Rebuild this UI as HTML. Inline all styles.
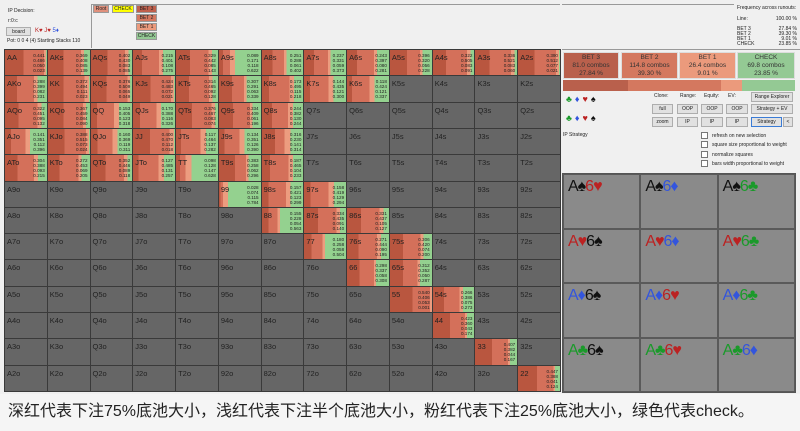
<!DOCTYPE html>
<html><head><meta charset="utf-8">
<style>
*{margin:0;padding:0;box-sizing:border-box}
body{width:800px;height:431px;background:#f0f0f0;font-family:"Liberation Sans",sans-serif;position:relative;overflow:hidden;color:#222}
.a{position:absolute;white-space:nowrap}
.t{font-size:5px}
.grid{position:absolute;left:4px;top:49px;width:557px;height:343px;padding:1px;background:#3a3a3a;display:grid;grid-template-columns:repeat(13,1fr);grid-template-rows:repeat(13,1fr);gap:1px}
.grid div{position:relative;overflow:hidden}
.g{background:#666}
.c{background:linear-gradient(to right,#b9563f 0 var(--a),#d4705a var(--a) var(--b),#ec9c7f var(--b) var(--c),#94d18f var(--c) 100%)}
.grid b{position:absolute;left:2px;top:3px;font-size:7.5px;font-weight:normal;color:#222}
.grid i{position:absolute;right:2px;top:3px;font-style:normal;font-size:4.6px;line-height:5px;text-align:right;color:#222}
.tb{position:absolute;font-size:5px;text-align:center;line-height:7px;height:8px;border:1px solid #999}
.bx{position:absolute;top:52px;height:27px;font-size:6.5px;line-height:8px;text-align:center;padding-top:1px;color:#333;border:1px solid #ddd}
.btn{position:absolute;height:10px;background:#e1e1e1;border:1px solid #adadad;font-size:5px;text-align:center;line-height:8px}
.cb{position:absolute;left:701px;font-size:5px;line-height:6px}
.cb:before{content:"";display:inline-block;width:5px;height:5px;border:1px solid #777;background:#fff;vertical-align:middle;margin-right:4px}
.cards{position:absolute;left:562px;top:173px;width:234px;height:220px;background:#8a8a8a;display:grid;grid-template-columns:repeat(3,1fr);grid-template-rows:repeat(4,1fr);border:1px solid #555}
.cards div{border:1px solid #5a5a5a;font-size:16px;padding:3px 0 0 4px;letter-spacing:-1px}
.s{color:#111}.h{color:#b22}.d{color:#3355dd}.k{color:#1a9a2a}
</style></head><body>
<div class="a t" style="left:8px;top:8px">IP Decision:</div>
<div class="a t" style="left:8px;top:18px">r:0:c</div>
<div class="btn" style="left:6px;top:27px;width:25px;height:9px">board</div>
<div class="a" style="left:35px;top:28px;font-size:6px"><span class="h">K♥</span> <span class="h">J♥</span> <span class="d">5♦</span></div>
<div class="a t" style="left:7px;top:38px">Pot: 0 0 4 (4) Starting Stacks 110</div>
<div class="a" style="left:91px;top:4px;width:1px;height:44px;background:#999"></div>
<div class="a" style="left:91px;top:4px;width:469px;height:1px;background:#999"></div>
<div class="tb" style="left:93px;top:5px;width:16px;background:#e0907c">Root</div>
<div class="tb" style="left:112px;top:5px;width:22px;background:#ffff00">CHECK</div>
<div class="tb" style="left:136px;top:5px;width:21px;background:#c0604c">BET 3</div>
<div class="tb" style="left:136px;top:14px;width:21px;background:#d4785f">BET 2</div>
<div class="tb" style="left:136px;top:23px;width:21px;background:#eb9a7c">BET 1</div>
<div class="tb" style="left:136px;top:32px;width:21px;background:#94c994">CHECK</div>
<div class="a" style="left:562px;top:4px;width:172px;height:1px;background:#999"></div>
<div class="a t" style="left:737px;top:5px">Frequency across runouts:</div>
<div class="a t" style="left:737px;top:16px;width:60px">Line:<span style="float:right">100.00 %</span></div>
<div class="a t" style="left:737px;top:27px;width:60px;line-height:5px">BET 3<span style="float:right">27.84 %</span><br>BET 2<span style="float:right">39.30 %</span><br>BET 1<span style="float:right">9.01 %</span><br>CHECK<span style="float:right">23.85 %</span></div>
<div class="a" style="left:562px;top:49px;width:238px;height:1px;background:#999"></div>
<div class="bx" style="left:563px;width:56px;background:#b9604c">BET 3<br>81.0 combos<br>27.84 %</div>
<div class="bx" style="left:621px;width:57px;background:#d4785f">BET 2<br>114.8 combos<br>39.30 %</div>
<div class="bx" style="left:679px;width:57px;background:#eb9a7c">BET 1<br>26.4 combos<br>9.01 %</div>
<div class="bx" style="left:737px;width:58px;background:#94c994">CHECK<br>69.8 combos<br>23.85 %</div>
<div class="a" style="left:563px;top:80px;width:232px;height:11px;background:linear-gradient(to right,#b9604c 0 65px,#d4785f 65px 158px,#eb9a7c 158px 179px,#94c994 179px)"></div>
<div class="a" style="left:566px;top:94px;font-size:9px;letter-spacing:3px"><span class="k">♣</span><span class="d">♦</span><span class="h">♥</span><span class="s">♠</span></div>
<div class="a" style="left:566px;top:113px;font-size:9px;letter-spacing:3px"><span class="k">♣</span><span class="d">♦</span><span class="h">♥</span><span class="s">♠</span></div>
<div class="a t" style="left:654px;top:93px">Clone:</div>
<div class="a t" style="left:680px;top:93px">Range:</div>
<div class="a t" style="left:704px;top:93px">Equity:</div>
<div class="a t" style="left:728px;top:93px">EV:</div>
<div class="btn" style="left:652px;top:104px;width:21px">full</div>
<div class="btn" style="left:677px;top:104px;width:21px">OOP</div>
<div class="btn" style="left:701px;top:104px;width:22px">OOP</div>
<div class="btn" style="left:726px;top:104px;width:22px">OOP</div>
<div class="btn" style="left:652px;top:117px;width:21px">zoom</div>
<div class="btn" style="left:677px;top:117px;width:21px">IP</div>
<div class="btn" style="left:701px;top:117px;width:22px">IP</div>
<div class="btn" style="left:726px;top:117px;width:22px">IP</div>
<div class="btn" style="left:751px;top:92px;width:42px">Range Explorer</div>
<div class="btn" style="left:751px;top:104px;width:42px">Strategy + EV</div>
<div class="btn" style="left:751px;top:117px;width:31px;border:1px solid #3a7bd5">Strategy</div>
<div class="btn" style="left:783px;top:117px;width:10px">&lt;</div>
<div class="a t" style="left:563px;top:132px">IP Strategy</div>
<div class="cb" style="top:132px">refresh on new selection</div>
<div class="cb" style="top:141px">square size proportional to weight</div>
<div class="cb" style="top:151px">normalize squares</div>
<div class="cb" style="top:160px">bars width proportional to weight</div>

<div class="grid">
<div class="c" style="--a:44%;--b:93%;--c:98%"><b>AA</b><i>0.441<br>0.486<br>0.050<br>0.023</i></div>
<div class="c" style="--a:37%;--b:78%;--c:86%"><b>AKs</b><i>0.369<br>0.408<br>0.085<br>0.139</i></div>
<div class="c" style="--a:40%;--b:83%;--c:92%"><b>AQs</b><i>0.402<br>0.430<br>0.083<br>0.085</i></div>
<div class="c" style="--a:22%;--b:62%;--c:72%"><b>AJs</b><i>0.215<br>0.401<br>0.108<br>0.275</i></div>
<div class="c" style="--a:33%;--b:77%;--c:86%"><b>ATs</b><i>0.329<br>0.442<br>0.085<br>0.143</i></div>
<div class="c" style="--a:9%;--b:26%;--c:38%"><b>A9s</b><i>0.089<br>0.171<br>0.118<br>0.622</i></div>
<div class="c" style="--a:25%;--b:54%;--c:60%"><b>A8s</b><i>0.251<br>0.288<br>0.061<br>0.402</i></div>
<div class="c" style="--a:24%;--b:57%;--c:63%"><b>A7s</b><i>0.237<br>0.331<br>0.059<br>0.373</i></div>
<div class="c" style="--a:24%;--b:64%;--c:72%"><b>A6s</b><i>0.243<br>0.397<br>0.080<br>0.281</i></div>
<div class="c" style="--a:40%;--b:72%;--c:77%"><b>A5s</b><i>0.396<br>0.320<br>0.056<br>0.228</i></div>
<div class="c" style="--a:32%;--b:83%;--c:91%"><b>A4s</b><i>0.322<br>0.505<br>0.083<br>0.091</i></div>
<div class="c" style="--a:34%;--b:86%;--c:94%"><b>A3s</b><i>0.336<br>0.521<br>0.083<br>0.060</i></div>
<div class="c" style="--a:39%;--b:90%;--c:98%"><b>A2s</b><i>0.390<br>0.512<br>0.077<br>0.021</i></div>

<div class="c" style="--a:29%;--b:69%;--c:77%"><b>AKo</b><i>0.288<br>0.399<br>0.082<br>0.231</i></div>
<div class="c" style="--a:37%;--b:87%;--c:98%"><b>KK</b><i>0.372<br>0.494<br>0.111<br>0.023</i></div>
<div class="c" style="--a:38%;--b:89%;--c:95%"><b>KQs</b><i>0.376<br>0.509<br>0.065<br>0.049</i></div>
<div class="c" style="--a:42%;--b:91%;--c:98%"><b>KJs</b><i>0.424<br>0.483<br>0.072<br>0.021</i></div>
<div class="c" style="--a:31%;--b:78%;--c:87%"><b>KTs</b><i>0.314<br>0.465<br>0.092<br>0.128</i></div>
<div class="c" style="--a:31%;--b:60%;--c:66%"><b>K9s</b><i>0.307<br>0.291<br>0.063<br>0.339</i></div>
<div class="c" style="--a:17%;--b:67%;--c:78%"><b>K8s</b><i>0.173<br>0.495<br>0.115<br>0.218</i></div>
<div class="c" style="--a:14%;--b:58%;--c:70%"><b>K7s</b><i>0.144<br>0.435<br>0.121<br>0.300</i></div>
<div class="c" style="--a:12%;--b:54%;--c:66%"><b>K6s</b><i>0.118<br>0.424<br>0.121<br>0.337</i></div>
<div class="g"><b>K5s</b></div><div class="g"><b>K4s</b></div><div class="g"><b>K3s</b></div><div class="g"><b>K2s</b></div>

<div class="c" style="--a:32%;--b:77%;--c:87%"><b>AQo</b><i>0.322<br>0.451<br>0.095<br>0.132</i></div>
<div class="c" style="--a:37%;--b:83%;--c:91%"><b>KQo</b><i>0.367<br>0.459<br>0.084<br>0.090</i></div>
<div class="c" style="--a:15%;--b:56%;--c:68%"><b>QQ</b><i>0.153<br>0.405<br>0.123<br>0.318</i></div>
<div class="c" style="--a:17%;--b:56%;--c:67%"><b>QJs</b><i>0.170<br>0.388<br>0.116<br>0.326</i></div>
<div class="c" style="--a:38%;--b:84%;--c:93%"><b>QTs</b><i>0.376<br>0.467<br>0.083<br>0.074</i></div>
<div class="c" style="--a:33%;--b:74%;--c:80%"><b>Q9s</b><i>0.334<br>0.409<br>0.061<br>0.196</i></div>
<div class="c" style="--a:24%;--b:63%;--c:76%"><b>Q8s</b><i>0.244<br>0.382<br>0.130<br>0.244</i></div>
<div class="g"><b>Q7s</b></div><div class="g"><b>Q6s</b></div><div class="g"><b>Q5s</b></div><div class="g"><b>Q4s</b></div><div class="g"><b>Q3s</b></div><div class="g"><b>Q2s</b></div>

<div class="c" style="--a:14%;--b:49%;--c:60%"><b>AJo</b><i>0.141<br>0.351<br>0.112<br>0.396</i></div>
<div class="c" style="--a:39%;--b:90%;--c:98%"><b>KJo</b><i>0.388<br>0.515<br>0.073<br>0.024</i></div>
<div class="c" style="--a:16%;--b:53%;--c:65%"><b>QJo</b><i>0.160<br>0.369<br>0.119<br>0.311</i></div>
<div class="c" style="--a:40%;--b:87%;--c:98%"><b>JJ</b><i>0.400<br>0.470<br>0.112<br>0.018</i></div>
<div class="c" style="--a:12%;--b:58%;--c:72%"><b>JTs</b><i>0.117<br>0.464<br>0.137<br>0.282</i></div>
<div class="c" style="--a:13%;--b:49%;--c:61%"><b>J9s</b><i>0.134<br>0.351<br>0.126<br>0.390</i></div>
<div class="c" style="--a:32%;--b:55%;--c:69%"><b>J8s</b><i>0.316<br>0.230<br>0.141<br>0.314</i></div>
<div class="g"><b>J7s</b></div><div class="g"><b>J6s</b></div><div class="g"><b>J5s</b></div><div class="g"><b>J4s</b></div><div class="g"><b>J3s</b></div><div class="g"><b>J2s</b></div>

<div class="c" style="--a:30%;--b:69%;--c:79%"><b>ATo</b><i>0.304<br>0.388<br>0.093<br>0.215</i></div>
<div class="c" style="--a:27%;--b:73%;--c:80%"><b>KTo</b><i>0.272<br>0.453<br>0.069<br>0.205</i></div>
<div class="c" style="--a:35%;--b:80%;--c:89%"><b>QTo</b><i>0.352<br>0.446<br>0.089<br>0.118</i></div>
<div class="c" style="--a:13%;--b:61%;--c:74%"><b>JTo</b><i>0.127<br>0.485<br>0.131<br>0.257</i></div>
<div class="c" style="--a:10%;--b:23%;--c:37%"><b>TT</b><i>0.098<br>0.128<br>0.147<br>0.628</i></div>
<div class="c" style="--a:38%;--b:64%;--c:70%"><b>T9s</b><i>0.383<br>0.258<br>0.062<br>0.296</i></div>
<div class="c" style="--a:19%;--b:65%;--c:76%"><b>T8s</b><i>0.187<br>0.465<br>0.104<br>0.233</i></div>
<div class="g"><b>T7s</b></div><div class="g"><b>T6s</b></div><div class="g"><b>T5s</b></div><div class="g"><b>T4s</b></div><div class="g"><b>T3s</b></div><div class="g"><b>T2s</b></div>

<div class="g"><b>A9o</b></div><div class="g"><b>K9o</b></div><div class="g"><b>Q9o</b></div><div class="g"><b>J9o</b></div><div class="g"><b>T9o</b></div>
<div class="c" style="--a:3%;--b:10%;--c:22%"><b>99</b><i>0.028<br>0.074<br>0.115<br>0.784</i></div>
<div class="c" style="--a:16%;--b:58%;--c:70%"><b>98s</b><i>0.157<br>0.421<br>0.123<br>0.299</i></div>
<div class="c" style="--a:16%;--b:58%;--c:71%"><b>97s</b><i>0.158<br>0.419<br>0.129<br>0.294</i></div>
<div class="g"><b>96s</b></div><div class="g"><b>95s</b></div><div class="g"><b>94s</b></div><div class="g"><b>93s</b></div><div class="g"><b>92s</b></div>

<div class="g"><b>A8o</b></div><div class="g"><b>K8o</b></div><div class="g"><b>Q8o</b></div><div class="g"><b>J8o</b></div><div class="g"><b>T8o</b></div><div class="g"><b>98o</b></div>
<div class="c" style="--a:16%;--b:38%;--c:44%"><b>88</b><i>0.155<br>0.228<br>0.054<br>0.563</i></div>
<div class="c" style="--a:33%;--b:77%;--c:86%"><b>87s</b><i>0.334<br>0.435<br>0.091<br>0.140</i></div>
<div class="c" style="--a:33%;--b:77%;--c:87%"><b>86s</b><i>0.331<br>0.437<br>0.105<br>0.127</i></div>
<div class="g"><b>85s</b></div><div class="g"><b>84s</b></div><div class="g"><b>83s</b></div><div class="g"><b>82s</b></div>

<div class="g"><b>A7o</b></div><div class="g"><b>K7o</b></div><div class="g"><b>Q7o</b></div><div class="g"><b>J7o</b></div><div class="g"><b>T7o</b></div><div class="g"><b>97o</b></div><div class="g"><b>87o</b></div>
<div class="c" style="--a:18%;--b:44%;--c:50%"><b>77</b><i>0.180<br>0.258<br>0.058<br>0.504</i></div>
<div class="c" style="--a:27%;--b:72%;--c:81%"><b>76s</b><i>0.271<br>0.444<br>0.090<br>0.195</i></div>
<div class="c" style="--a:31%;--b:73%;--c:80%"><b>75s</b><i>0.306<br>0.420<br>0.074<br>0.200</i></div>
<div class="g"><b>74s</b></div><div class="g"><b>73s</b></div><div class="g"><b>72s</b></div>

<div class="g"><b>A6o</b></div><div class="g"><b>K6o</b></div><div class="g"><b>Q6o</b></div><div class="g"><b>J6o</b></div><div class="g"><b>T6o</b></div><div class="g"><b>96o</b></div><div class="g"><b>86o</b></div><div class="g"><b>76o</b></div>
<div class="c" style="--a:30%;--b:64%;--c:69%"><b>66</b><i>0.298<br>0.337<br>0.058<br>0.308</i></div>
<div class="c" style="--a:31%;--b:66%;--c:71%"><b>65s</b><i>0.312<br>0.352<br>0.050<br>0.287</i></div>
<div class="g"><b>64s</b></div><div class="g"><b>63s</b></div><div class="g"><b>62s</b></div>

<div class="g"><b>A5o</b></div><div class="g"><b>K5o</b></div><div class="g"><b>Q5o</b></div><div class="g"><b>J5o</b></div><div class="g"><b>T5o</b></div><div class="g"><b>95o</b></div><div class="g"><b>85o</b></div><div class="g"><b>75o</b></div><div class="g"><b>65o</b></div>
<div class="c" style="--a:54%;--b:95%;--c:100%"><b>55</b><i>0.540<br>0.406<br>0.053<br>0.001</i></div>
<div class="c" style="--a:27%;--b:65%;--c:73%"><b>54s</b><i>0.266<br>0.386<br>0.075<br>0.273</i></div>
<div class="g"><b>53s</b></div><div class="g"><b>52s</b></div>

<div class="g"><b>A4o</b></div><div class="g"><b>K4o</b></div><div class="g"><b>Q4o</b></div><div class="g"><b>J4o</b></div><div class="g"><b>T4o</b></div><div class="g"><b>94o</b></div><div class="g"><b>84o</b></div><div class="g"><b>74o</b></div><div class="g"><b>64o</b></div><div class="g"><b>54o</b></div>
<div class="c" style="--a:42%;--b:78%;--c:83%"><b>44</b><i>0.423<br>0.360<br>0.043<br>0.174</i></div>
<div class="g"><b>43s</b></div><div class="g"><b>42s</b></div>

<div class="g"><b>A3o</b></div><div class="g"><b>K3o</b></div><div class="g"><b>Q3o</b></div><div class="g"><b>J3o</b></div><div class="g"><b>T3o</b></div><div class="g"><b>93o</b></div><div class="g"><b>83o</b></div><div class="g"><b>73o</b></div><div class="g"><b>63o</b></div><div class="g"><b>53o</b></div><div class="g"><b>43o</b></div>
<div class="c" style="--a:41%;--b:79%;--c:83%"><b>33</b><i>0.407<br>0.382<br>0.044<br>0.167</i></div>
<div class="g"><b>32s</b></div>

<div class="g"><b>A2o</b></div><div class="g"><b>K2o</b></div><div class="g"><b>Q2o</b></div><div class="g"><b>J2o</b></div><div class="g"><b>T2o</b></div><div class="g"><b>92o</b></div><div class="g"><b>82o</b></div><div class="g"><b>72o</b></div><div class="g"><b>62o</b></div><div class="g"><b>52o</b></div><div class="g"><b>42o</b></div><div class="g"><b>32o</b></div>
<div class="c" style="--a:45%;--b:84%;--c:88%"><b>22</b><i>0.447<br>0.388<br>0.041<br>0.124</i></div>
</div>

<div class="cards">
<div><span class="s">A♠</span><span class="h">6♥</span></div>
<div><span class="s">A♠</span><span class="d">6♦</span></div>
<div><span class="s">A♠</span><span class="k">6♣</span></div>
<div><span class="h">A♥</span><span class="s">6♠</span></div>
<div><span class="h">A♥</span><span class="d">6♦</span></div>
<div><span class="h">A♥</span><span class="k">6♣</span></div>
<div><span class="d">A♦</span><span class="s">6♠</span></div>
<div><span class="d">A♦</span><span class="h">6♥</span></div>
<div><span class="d">A♦</span><span class="k">6♣</span></div>
<div><span class="k">A♣</span><span class="s">6♠</span></div>
<div><span class="k">A♣</span><span class="h">6♥</span></div>
<div><span class="k">A♣</span><span class="d">6♦</span></div>
</div>

<div class="a" style="left:0;top:394px;width:800px;height:37px;background:#f5f5f5"></div>
<div class="a" style="left:8px;top:402px;font-size:16px;line-height:20px;color:#222;font-family:'Liberation Sans','Noto Sans CJK SC',sans-serif">深红代表下注75%底池大小，浅红代表下注半个底池大小，粉红代表下注25%底池大小，绿色代表check。</div>
</body></html>
